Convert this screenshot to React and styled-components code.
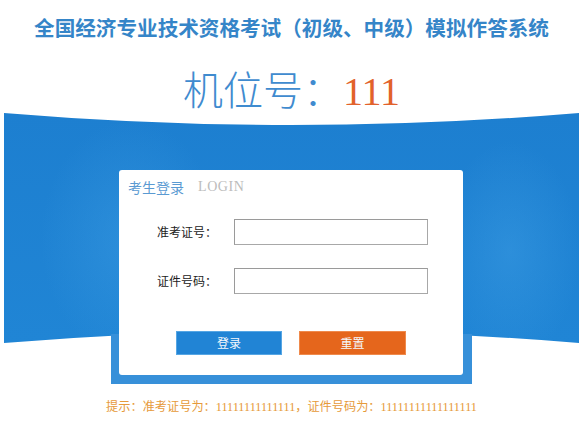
import React from "react";
import styled, { createGlobalStyle } from "styled-components";

const Global = createGlobalStyle`
  html, body { margin: 0; padding: 0; background: #ffffff; }
  body { font-family: "Noto Sans CJK SC", "Noto Sans", sans-serif; }
  * { box-sizing: border-box; }
`;

const Page = styled.div`
  width: 575px;
  margin-left: 4px;
  display: flex;
  flex-direction: column;
  align-items: center;
`;

const Title = styled.h1`
  margin: 0;
  padding-top: 13px;
  height: 41px;
  font-size: 20.6px;
  line-height: 28px;
  font-weight: 700;
  color: #3585c8;
  white-space: nowrap;
`;

const Seat = styled.div`
  margin-top: 23px;
  height: 48px;
  display: flex;
  align-items: baseline;
  font-size: 40px;
  line-height: 48px;
  font-weight: 300;
  color: #3f8bcf;
  white-space: nowrap;
`;

const SeatNo = styled.span`
  font-family: "Liberation Serif", serif;
  font-weight: 400;
  line-height: 48px;
  color: #e2622b;
`;

const Stage = styled.section`
  position: relative;
  margin-top: 1px;
  width: 575px;
  padding-top: 49px;
  display: flex;
  justify-content: center;

  &::before {
    content: "";
    position: absolute;
    top: 0;
    left: 0;
    width: 575px;
    height: 230px;
    background:
      radial-gradient(ellipse 90px 120px at 22% 55%, rgba(70, 165, 232, 0.35), rgba(70, 165, 232, 0) 100%),
      radial-gradient(ellipse 70px 110px at 88% 60%, rgba(70, 165, 232, 0.35), rgba(70, 165, 232, 0) 100%),
      linear-gradient(to bottom, #1d7fd0, #2085d5);
    clip-path: path("M0 0 Q287.5 24 575 0 L575 230 Q287.5 206 0 230 Z");
  }
`;

const Frame = styled.div`
  position: relative;
  z-index: 1;
  width: 361px;
  padding: 8px 9px 9px 8px;
  background: linear-gradient(to bottom, rgba(55, 144, 217, 0) 0, rgba(55, 144, 217, 0) 172px, #3790d9 172px, #3790d9 100%);
`;

const Card = styled.div`
  background: #ffffff;
  border-radius: 3px;
  padding: 7px 0 20px;
  display: flex;
  flex-direction: column;
`;

const CardHead = styled.div`
  height: 20px;
  padding-left: 9px;
  display: flex;
  align-items: center;
  gap: 14px;
  white-space: nowrap;
`;

const HeadCn = styled.span`
  font-size: 14px;
  line-height: 20px;
  color: #5a9ad2;
`;

const HeadEn = styled.span`
  font-family: "Liberation Serif", serif;
  font-size: 14px;
  line-height: 20px;
  letter-spacing: 0.6px;
  color: #bcbcbc;
`;

const Form = styled.div`
  margin-top: 22px;
  padding-left: 38px;
  display: flex;
  flex-direction: column;
  gap: 23px;
`;

const Row = styled.div`
  display: flex;
  align-items: center;
  height: 26px;
`;

const Label = styled.label`
  width: 77px;
  font-size: 12px;
  line-height: 16px;
  color: #222222;
  white-space: nowrap;
`;

const Input = styled.input`
  width: 194px;
  height: 26px;
  margin: 0;
  padding: 0 4px;
  border: 1px solid #a8a8a8;
  border-top-color: #9a9a9a;
  border-left-color: #9a9a9a;
  background: #ffffff;
  outline: none;
`;

const Buttons = styled.div`
  margin-top: 37px;
  display: flex;
  justify-content: center;
  gap: 17px;
`;

const Button = styled.button`
  width: ${(p) => p.$w}px;
  height: 24px;
  margin: 0;
  padding: 0;
  border: 1px solid ${(p) => (p.$variant === "reset" ? "#ef8a4c" : "#56a6e4")};
  background: ${(p) => (p.$variant === "reset" ? "#e5661c" : "#2184d5")};
  color: #f4f8fc;
  font-family: "Noto Sans CJK SC", sans-serif;
  font-size: 12px;
  line-height: 22px;
  cursor: pointer;
`;

const Hint = styled.p`
  margin: 15px 0 0;
  font-family: "Liberation Serif", "Noto Sans CJK SC", serif;
  font-size: 12.2px;
  line-height: 16px;
  color: #e69a3a;
  white-space: nowrap;
`;

export default function App() {
  return (
    <>
      <Global />
      <Page>
        <Title>全国经济专业技术资格考试（初级、中级）模拟作答系统</Title>
        <Seat>
          机位号：<SeatNo>111</SeatNo>
        </Seat>
        <Stage>
          <Frame>
            <Card>
              <CardHead>
                <HeadCn>考生登录</HeadCn>
                <HeadEn>LOGIN</HeadEn>
              </CardHead>
              <Form>
                <Row>
                  <Label htmlFor="ticket">准考证号：</Label>
                  <Input id="ticket" type="text" />
                </Row>
                <Row>
                  <Label htmlFor="idno">证件号码：</Label>
                  <Input id="idno" type="text" />
                </Row>
              </Form>
              <Buttons>
                <Button $w={106}>登录</Button>
                <Button $w={107} $variant="reset">重置</Button>
              </Buttons>
            </Card>
          </Frame>
        </Stage>
        <Hint>提示：准考证号为：11111111111111，证件号码为：11111111111111111</Hint>
      </Page>
    </>
  );
}
